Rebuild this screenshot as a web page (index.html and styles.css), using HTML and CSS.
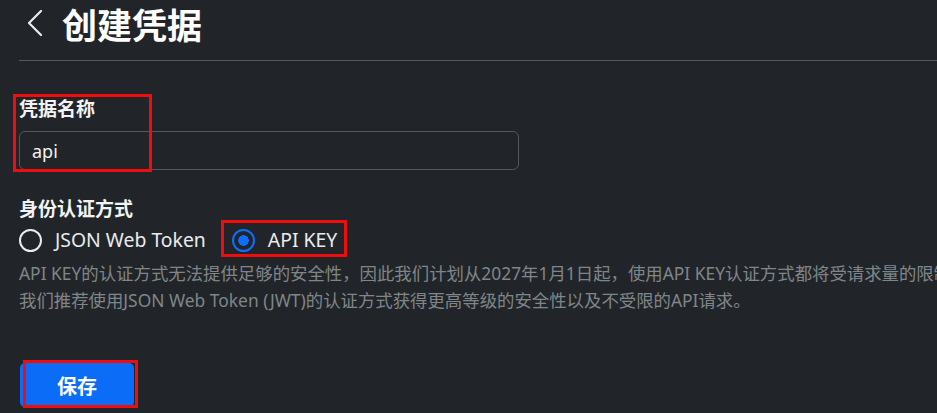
FILE: index.html
```html
<!DOCTYPE html>
<html lang="zh-CN">
<head>
<meta charset="utf-8">
<title>创建凭据</title>
<link rel="stylesheet" href="styles.css">
</head>
<body>
<div class="page">
  <header class="header">
    <svg class="back" width="18" height="28" viewBox="0 0 18 28" aria-hidden="true">
      <path d="M15 2 L3 14 L15 26" fill="none" stroke="#e9ecef" stroke-width="2.2" stroke-linecap="round" stroke-linejoin="round"/>
    </svg>
    <h1 class="title">创建凭据</h1>
  </header>

  <form class="form">
    <label class="label" for="name">凭据名称</label>
    <input class="input" id="name" type="text" value="api">

    <div class="label label-auth">身份认证方式</div>
    <div class="radios">
      <label class="radio"><span class="dot"></span>JSON Web Token</label>
      <label class="radio checked"><span class="dot"></span>API KEY</label>
    </div>
    <div class="help">
      <span class="line">API KEY的认证方式无法提供足够的安全性，因此我们计划从2027年1月1日起，使用API KEY认证方式都将受请求量的限制，</span>
      <span class="line">我们推荐使用JSON Web Token (JWT)的认证方式获得更高等级的安全性以及不受限的API请求。</span>
    </div>

    <button class="btn" type="button">保存</button>
  </form>
</div>

<div class="mark mark-name"></div>
<div class="mark mark-key"></div>
<div class="mark mark-save"></div>
</body>
</html>
```

FILE: styles.css
```css
html, body {
  margin: 0;
  padding: 0;
  background: #212529;
  overflow: hidden;
}
body {
  width: 937px;
  height: 413px;
  position: relative;
  font-family: "Noto Sans", "Noto Sans CJK SC", sans-serif;
  color: #dee2e6;
}
.page {
  padding-left: 19px;
}
.header {
  box-sizing: border-box;
  display: flex;
  align-items: center;
  height: 61px;
  padding-bottom: 13px;
  border-bottom: 1px solid #55595d;
}
.back {
  margin-left: 7px;
  margin-right: 18px;
  margin-top: -1px;
}
.title {
  margin: 0;
  font-size: 35px;
  font-weight: 700;
  color: #ffffff;
  font-family: "Noto Sans CJK SC", sans-serif;
  line-height: 44px;
}
.form {
  display: flex;
  flex-direction: column;
  align-items: flex-start;
  padding-top: 32px;
}
.label {
  font-family: "Noto Sans CJK SC", sans-serif;
  font-size: 19px;
  font-weight: 700;
  line-height: 30px;
  color: #f1f3f5;
}
.input {
  box-sizing: border-box;
  margin-top: 8px;
  width: 500px;
  height: 39px;
  padding: 0 12px;
  background: #212529;
  border: 1px solid #54585c;
  border-radius: 6px;
  color: #f1f3f5;
  font-family: "Noto Sans", sans-serif;
  font-size: 18px;
  outline: none;
}
.label-auth {
  margin-top: 23px;
}
.radios {
  display: flex;
  align-items: center;
  gap: 26px;
  margin-top: 2px;
  height: 30px;
}
.radio {
  display: flex;
  align-items: center;
  gap: 13px;
  font-size: 19.4px;
  color: #e9ecef;
  line-height: 30px;
}
.dot {
  box-sizing: border-box;
  width: 23px;
  height: 23px;
  border-radius: 50%;
  border: 2px solid #e9ecef;
}
.checked .dot {
  border-color: #0d6efd;
  background: radial-gradient(circle, #0d6efd 0 5px, #212529 5.5px);
}
.help {
  margin-top: 5px;
  font-size: 17.4px;
  line-height: 27px;
  color: #80858a;
  white-space: nowrap;
}
.line {
  display: block;
}
.btn {
  margin-top: 49px;
  margin-left: 1px;
  width: 114px;
  height: 44px;
  border: none;
  border-radius: 5px;
  background: #0b6cf8;
  color: #ffffff;
  font-family: "Noto Sans CJK SC", sans-serif;
  font-size: 20px;
  font-weight: 700;
}
.mark {
  position: absolute;
  box-sizing: border-box;
  border: 3px solid #f20d0d;
  pointer-events: none;
}
.mark-name {
  left: 13px;
  top: 94px;
  width: 139px;
  height: 78px;
}
.mark-key {
  left: 221px;
  top: 220px;
  width: 126px;
  height: 37px;
}
.mark-save {
  left: 23px;
  top: 360px;
  width: 115px;
  height: 48px;
}
```
